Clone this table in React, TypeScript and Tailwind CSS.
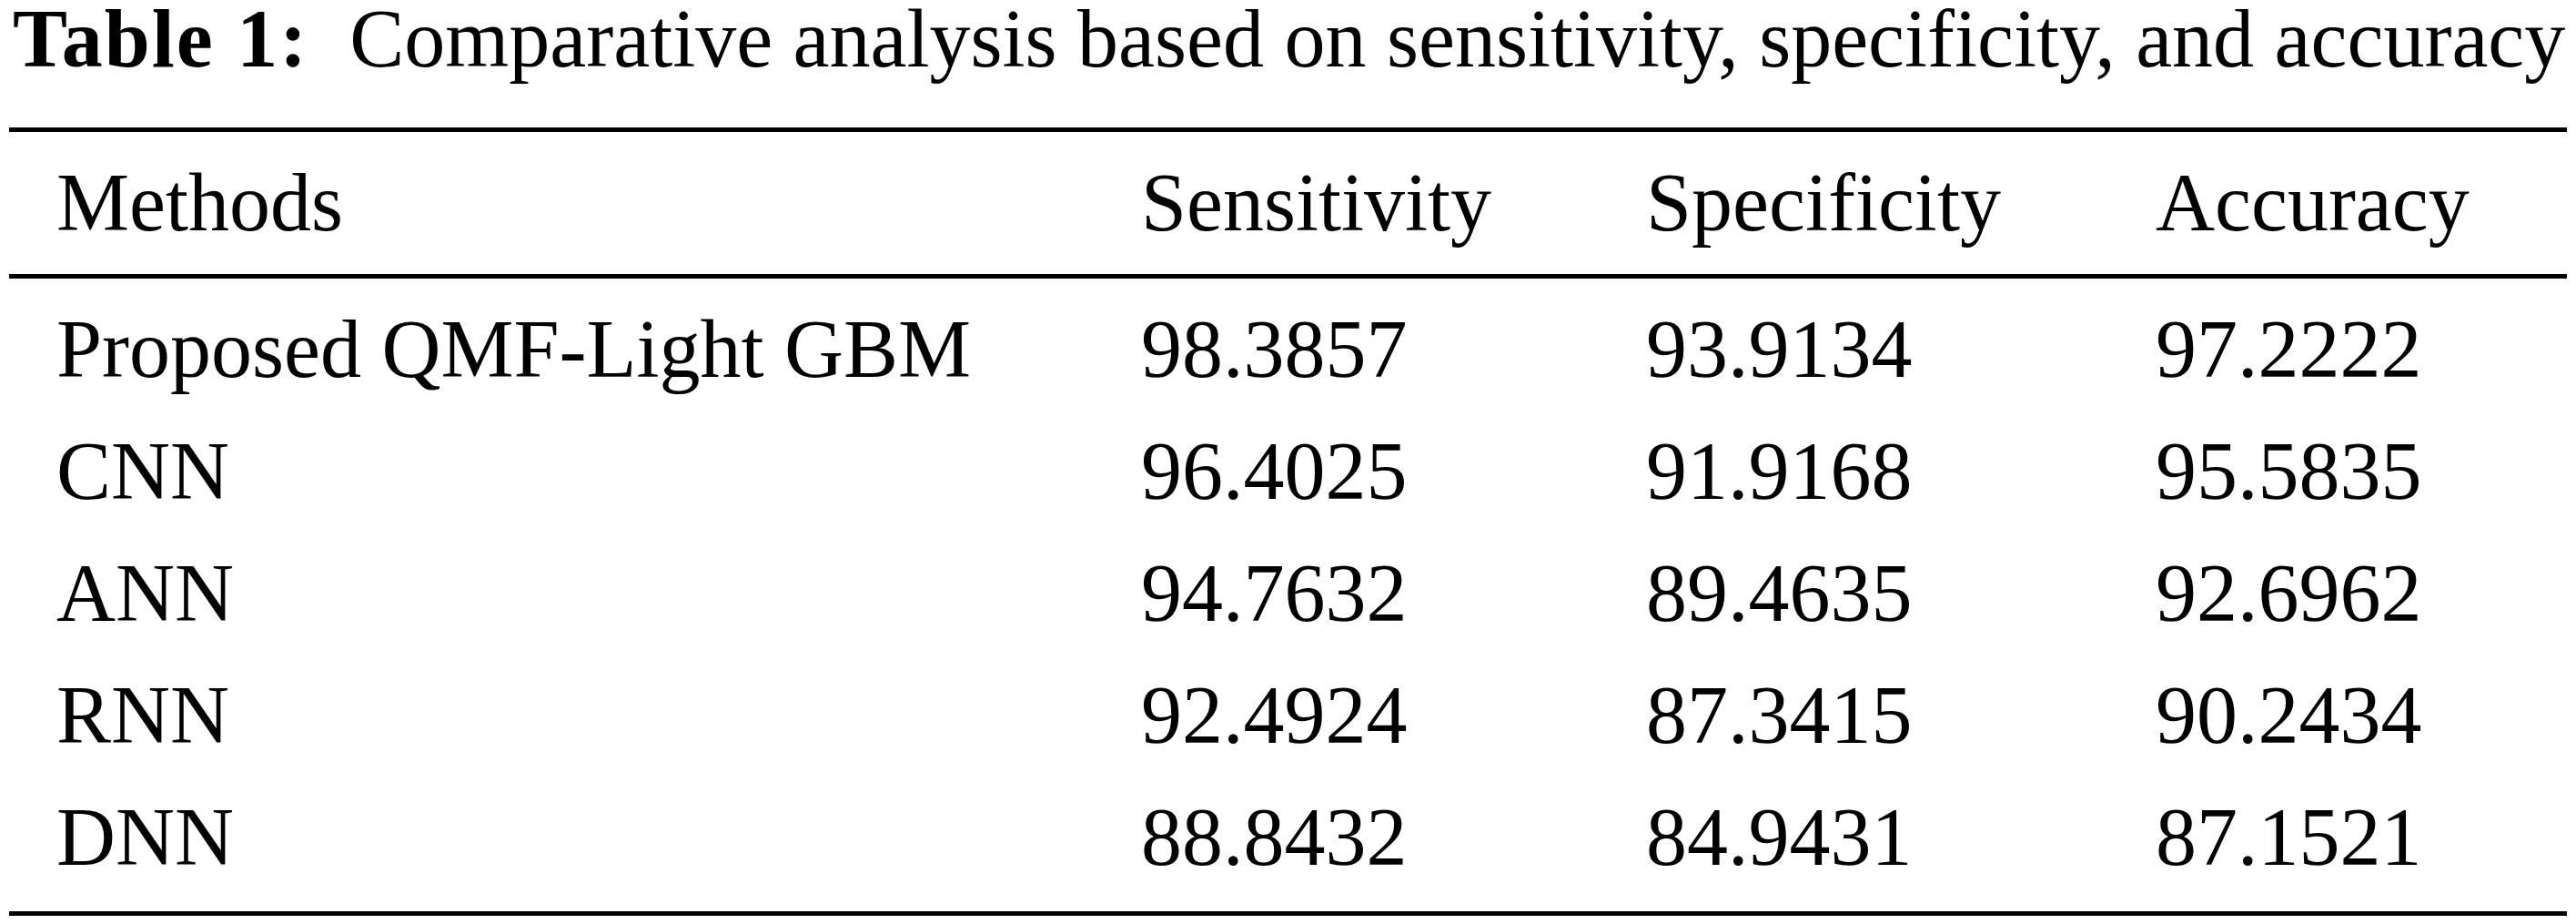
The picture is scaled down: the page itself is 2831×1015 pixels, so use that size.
import React from "react";

const rows: [string, string, string, string][] = [
  ["Proposed QMF-Light GBM", "98.3857", "93.9134", "97.2222"],
  ["CNN", "96.4025", "91.9168", "95.5835"],
  ["ANN", "94.7632", "89.4635", "92.6962"],
  ["RNN", "92.4924", "87.3415", "90.2434"],
  ["DNN", "88.8432", "84.9431", "87.1521"],
];

export default function App() {
  return (
    <div
      className="w-[2831px] h-[1015px] bg-white text-black pl-[10px]"
      style={{ fontFamily: '"Liberation Serif", "Times New Roman", serif' }}
    >
      <div className="w-[2811px]">
        <div className="h-[86px] leading-[86px] text-[90px] pl-[4px] whitespace-nowrap">
          <span className="font-bold tracking-[2px]">Table 1:</span>
          <span>{"\u00a0\u00a0"}Comparative analysis based on sensitivity, specificity, and accuracy</span>
        </div>
        <div className="mt-[54px] h-[5px] bg-black" />
        <div className="grid grid-cols-[1192px_555px_560px_1fr] pl-[52px] h-[156px] leading-[156px] text-[90px] whitespace-nowrap">
          <div>Methods</div>
          <div>Sensitivity</div>
          <div>Specificity</div>
          <div>Accuracy</div>
        </div>
        <div className="h-[5px] bg-black" />
        <div className="pt-[11px] pb-[14px]">
          {rows.map((r) => (
            <div
              key={r[0]}
              className="grid grid-cols-[1192px_555px_560px_1fr] pl-[52px] h-[134px] leading-[134px] text-[90px] whitespace-nowrap"
            >
              <div>{r[0]}</div>
              <div>{r[1]}</div>
              <div>{r[2]}</div>
              <div>{r[3]}</div>
            </div>
          ))}
        </div>
        <div className="h-[5px] bg-black" />
      </div>
    </div>
  );
}
